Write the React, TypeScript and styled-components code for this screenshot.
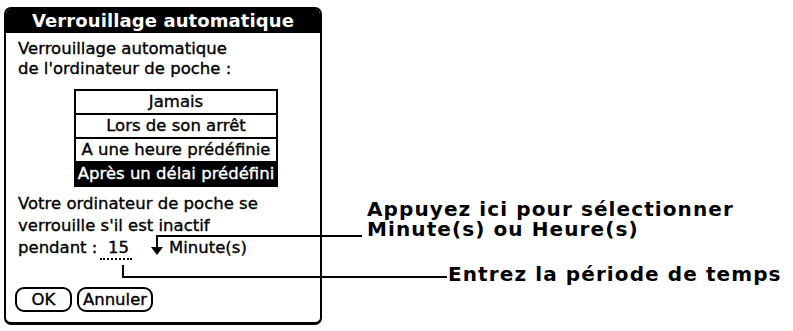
import React from 'react';
import styled, { createGlobalStyle } from 'styled-components';

const GlobalStyle = createGlobalStyle`
  html, body {
    margin: 0;
    padding: 0;
    background: #fff;
  }
  body {
    font-family: 'DejaVu Sans', sans-serif;
    color: #000;
  }
`;

const Stage = styled.div`
  position: relative;
  width: 793px;
  height: 331px;
  display: flex;
  align-items: flex-start;
  overflow: hidden;
  background: #fff;
`;

const Dialog = styled.div`
  box-sizing: border-box;
  margin: 7px 0 0 4px;
  width: 318px;
  height: 318px;
  border: 2px solid #000;
  border-bottom-width: 3px;
  border-radius: 7px;
  overflow: hidden;
  display: flex;
  flex-direction: column;
  font-size: 16.5px;
  -webkit-text-stroke: 0.35px;
`;

const TitleBar = styled.div`
  height: 24px;
  background: #000;
  color: #fff;
  font-weight: bold;
  font-size: 18px;
  line-height: 24px;
  text-align: center;
  letter-spacing: 0.1px;
  -webkit-text-stroke: 0;
`;

const Body = styled.div`
  padding: 6px 0 0 12px;
  display: flex;
  flex-direction: column;
  flex: 1;
`;

const Para = styled.div<{ $lh: number }>`
  line-height: ${(p) => p.$lh}px;
  white-space: nowrap;
`;

const OptionList = styled.div`
  box-sizing: border-box;
  margin: 10px 0 0 56px;
  width: 204px;
  border: 2px solid #000;
`;

const Option = styled.div<{ $selected?: boolean }>`
  height: 22px;
  line-height: 22px;
  text-align: center;
  white-space: nowrap;
  background: ${(p) => (p.$selected ? '#000' : '#fff')};
  color: ${(p) => (p.$selected ? '#fff' : '#000')};
  & + & {
    border-top: 2px solid #000;
  }
`;

const Info = styled.div`
  margin-top: 6px;
  line-height: 22px;
`;

const FieldRow = styled.div`
  display: flex;
  align-items: flex-start;
  height: 22px;
  line-height: 22px;
`;

const FieldLabel = styled.span`
  width: 82px;
  white-space: nowrap;
`;

const TimeField = styled.span`
  box-sizing: border-box;
  width: 32px;
  height: 23px;
  padding-right: 3px;
  text-align: right;
  border-bottom: 2px dotted #000;
`;

const PopupArrow = styled.svg`
  margin: 10px 0 0 19px;
  flex: none;
`;

const UnitLabel = styled.span`
  margin-left: 6px;
`;

const ButtonRow = styled.div`
  margin-top: auto;
  margin-left: -3px;
  padding-bottom: 10px;
  display: flex;
  gap: 5px;
`;

const Button = styled.div<{ $w: number }>`
  box-sizing: border-box;
  width: ${(p) => p.$w}px;
  height: 25px;
  border: 2px solid #000;
  border-radius: 9px;
  line-height: 21px;
  text-align: center;
`;

const Notes = styled.div`
  display: flex;
  flex-direction: column;
  padding-top: 199px;
  font-family: 'DejaVu Sans', sans-serif;
  font-weight: bold;
  font-size: 20px;
  letter-spacing: 1.1px;
  line-height: 20px;
  white-space: nowrap;
`;

const Note = styled.div<{ $left: number; $top?: number }>`
  margin-left: ${(p) => p.$left}px;
  margin-top: ${(p) => p.$top ?? 0}px;
`;

const Leaders = styled.svg`
  position: absolute;
  left: 0;
  top: 0;
  pointer-events: none;
`;

const options = [
  'Jamais',
  'Lors de son arrêt',
  'A une heure prédéfinie',
  'Après un délai prédéfini',
];

export default function App() {
  return (
    <>
      <GlobalStyle />
      <Stage>
        <Dialog>
          <TitleBar>Verrouillage automatique</TitleBar>
          <Body>
            <Para $lh={20}>
              Verrouillage automatique
              <br />
              de l'ordinateur de poche :
            </Para>
            <OptionList>
              {options.map((o, i) => (
                <Option key={o} $selected={i === options.length - 1}>
                  {o}
                </Option>
              ))}
            </OptionList>
            <Info>
              Votre ordinateur de poche se
              <br />
              verrouille s'il est inactif
              <FieldRow>
                <FieldLabel>pendant :</FieldLabel>
                <TimeField>15</TimeField>
                <PopupArrow width="12" height="8" viewBox="0 0 12 8">
                  <polygon points="0,0 12,0 6,8" fill="#000" />
                </PopupArrow>
                <UnitLabel>Minute(s)</UnitLabel>
              </FieldRow>
            </Info>
            <ButtonRow>
              <Button $w={57}>OK</Button>
              <Button $w={76}>Annuler</Button>
            </ButtonRow>
          </Body>
        </Dialog>
        <Notes>
          <Note $left={45}>
            Appuyez ici pour sélectionner
            <br />
            Minute(s) ou Heure(s)
          </Note>
          <Note $left={126} $top={25}>
            Entrez la période de temps
          </Note>
        </Notes>
        <Leaders width="793" height="331" viewBox="0 0 793 331">
          <path d="M157 248 V236 H362" fill="none" stroke="#000" strokeWidth="2" />
          <path d="M123 265 V277 H447" fill="none" stroke="#000" strokeWidth="2" />
        </Leaders>
      </Stage>
    </>
  );
}
